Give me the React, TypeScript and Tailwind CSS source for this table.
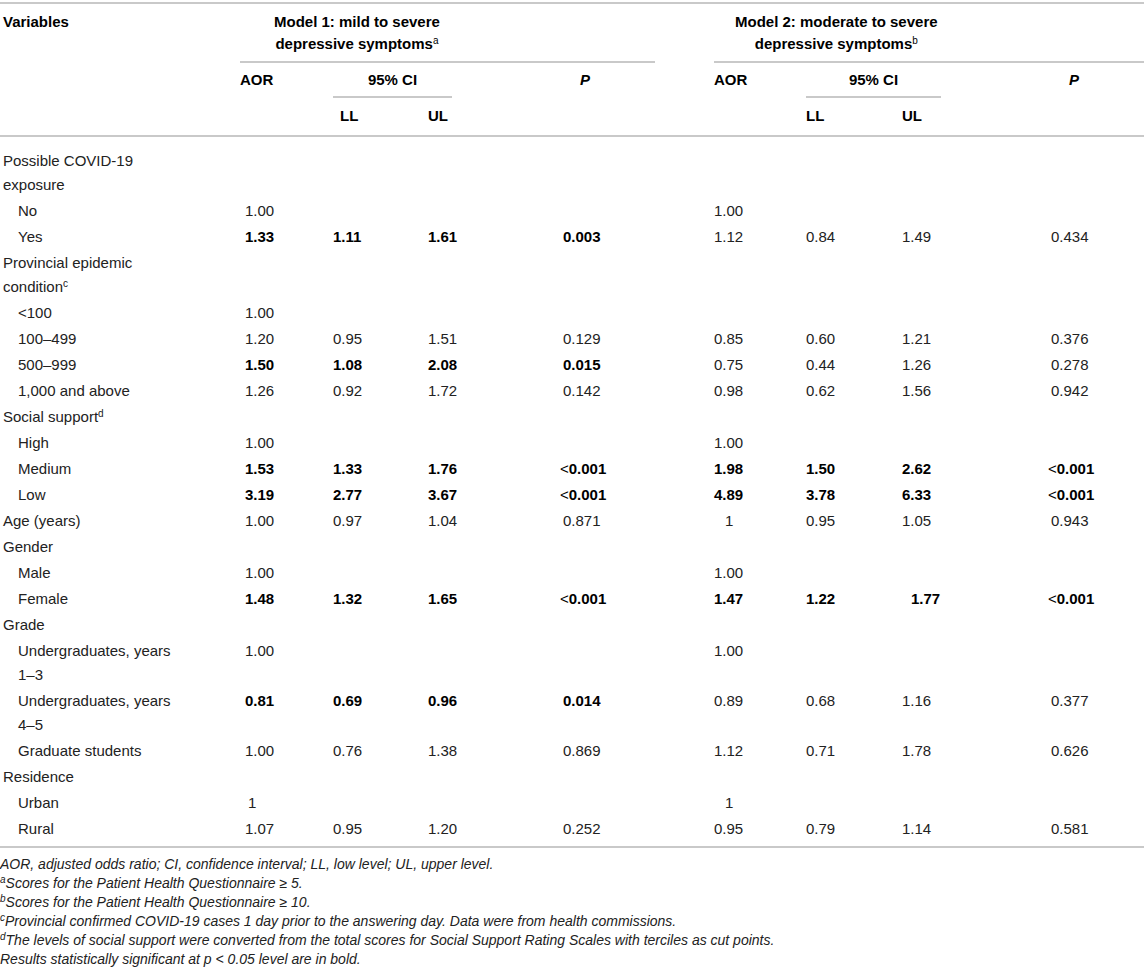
import React from 'react';

type Row = {
  label: React.ReactNode;
  sub?: boolean;
  m1?: string[];
  m2?: string[];
  b1?: boolean;
  b2?: boolean;
};

const cols = 'grid grid-cols-[240px_93px_95px_135px_151px_92px_96px_149px_93px]';

const rows: Row[] = [
  { label: <>Possible COVID-19<br />exposure</> },
  { label: 'No', sub: true, m1: ['1.00'], m2: ['1.00'] },
  { label: 'Yes', sub: true, m1: ['1.33', '1.11', '1.61', '0.003'], b1: true, m2: ['1.12', '0.84', '1.49', '0.434'] },
  { label: <>Provincial epidemic<br />condition<sup className="text-[10px]">c</sup></> },
  { label: <><span className="font-light">&lt;</span>100</>, sub: true, m1: ['1.00'] },
  { label: '100–499', sub: true, m1: ['1.20', '0.95', '1.51', '0.129'], m2: ['0.85', '0.60', '1.21', '0.376'] },
  { label: '500–999', sub: true, m1: ['1.50', '1.08', '2.08', '0.015'], b1: true, m2: ['0.75', '0.44', '1.26', '0.278'] },
  { label: '1,000 and above', sub: true, m1: ['1.26', '0.92', '1.72', '0.142'], m2: ['0.98', '0.62', '1.56', '0.942'] },
  { label: <>Social support<sup className="text-[10px]">d</sup></> },
  { label: 'High', sub: true, m1: ['1.00'], m2: ['1.00'] },
  { label: 'Medium', sub: true, m1: ['1.53', '1.33', '1.76', '<0.001'], b1: true, m2: ['1.98', '1.50', '2.62', '<0.001'], b2: true },
  { label: 'Low', sub: true, m1: ['3.19', '2.77', '3.67', '<0.001'], b1: true, m2: ['4.89', '3.78', '6.33', '<0.001'], b2: true },
  { label: 'Age (years)', m1: ['1.00', '0.97', '1.04', '0.871'], m2: ['1', '0.95', '1.05', '0.943'] },
  { label: 'Gender' },
  { label: 'Male', sub: true, m1: ['1.00'], m2: ['1.00'] },
  { label: 'Female', sub: true, m1: ['1.48', '1.32', '1.65', '<0.001'], b1: true, m2: ['1.47', '1.22', '1.77', '<0.001'], b2: true },
  { label: 'Grade' },
  { label: <>Undergraduates, years<br />1–3</>, sub: true, m1: ['1.00'], m2: ['1.00'] },
  { label: <>Undergraduates, years<br />4–5</>, sub: true, m1: ['0.81', '0.69', '0.96', '0.014'], b1: true, m2: ['0.89', '0.68', '1.16', '0.377'] },
  { label: 'Graduate students', sub: true, m1: ['1.00', '0.76', '1.38', '0.869'], m2: ['1.12', '0.71', '1.78', '0.626'] },
  { label: 'Residence' },
  { label: 'Urban', sub: true, m1: ['1'], m2: ['1'] },
  { label: 'Rural', sub: true, m1: ['1.07', '0.95', '1.20', '0.252'], m2: ['0.95', '0.79', '1.14', '0.581'] },
];

// small quirks of the original typesetting
function shift(v: string, model: 1 | 2, i: number) {
  if (i === 0 && v === '1') return model === 1 ? 'pl-[8px]' : 'pl-[11px]';
  if (model === 2 && v === '1.77') return 'pl-[9px]';
  if (i === 0 && model === 1) return 'pl-[5px]';
  if (v.startsWith('<')) return '-ml-[3px]';
  return '';
}

function Val({ v, bold }: { v: string; bold?: boolean }) {
  if (v.startsWith('<')) {
    return (
      <span className={bold ? 'font-bold text-black' : ''}>
        <span className="font-normal">&lt;</span>
        {v.slice(1)}
      </span>
    );
  }
  return <span className={bold ? 'font-bold text-black' : ''}>{v}</span>;
}

function BodyRow({ r }: { r: Row }) {
  const m1 = r.m1 ?? [];
  const m2 = r.m2 ?? [];
  return (
    <div className={cols + ' py-px leading-[24px]'}>
      <div className={r.sub ? 'pl-[18px]' : 'pl-[3px]'}>{r.label}</div>
      {[0, 1, 2, 3].map(i => (
        <div key={'a' + i} className={shift(m1[i] ?? '', 1, i)}>
          {m1[i] && <Val v={m1[i]} bold={r.b1} />}
        </div>
      ))}
      {[0, 1, 2, 3].map(i => (
        <div key={'b' + i} className={shift(m2[i] ?? '', 2, i)}>
          {m2[i] && <Val v={m2[i]} bold={r.b2} />}
        </div>
      ))}
    </div>
  );
}

export default function App() {
  return (
    <div className="w-[1144px] bg-white text-[15px] text-[#222] font-['Liberation_Sans',Arial,sans-serif]">
      <div className="pt-[2px]">
        {/* Header */}
        <div className={cols + ' border-t-2 border-b-2 border-[#c9c9c9] font-bold text-black leading-[22px]'}>
          <div className="row-span-3 pl-[3px] pt-[7px]">Variables</div>
          <div className="col-span-4 pt-[7px]">
            <div className="w-[415px] border-b-2 border-[#c9c9c9] pb-[6px]">
              <div className="ml-[34px] inline-block text-center">
                Model 1: mild to severe
                <br />
                depressive symptoms<sup className="text-[10px] font-normal">a</sup>
              </div>
            </div>
          </div>
          <div className="col-span-4 pt-[7px]">
            <div className="border-b-2 border-[#c9c9c9] pb-[6px]">
              <div className="ml-[21px] inline-block text-center">
                Model 2: moderate to severe
                <br />
                depressive symptoms<sup className="text-[10px] font-normal">b</sup>
              </div>
            </div>
          </div>
          <div className="row-span-2 pt-[6px] pl-[0px]">AOR</div>
          <div className="col-span-2 pt-[6px]">
            <div className="w-[119px] border-b-2 border-[#c9c9c9] pb-[5px] text-center">95% CI</div>
          </div>
          <div className="row-span-2 pt-[6px] pl-[17px] italic">P</div>
          <div className="row-span-2 pt-[6px]">AOR</div>
          <div className="col-span-2 pt-[6px]">
            <div className="w-[135px] border-b-2 border-[#c9c9c9] pb-[5px] text-center">95% CI</div>
          </div>
          <div className="row-span-2 pt-[6px] pl-[18px] italic">P</div>
          <div className="pt-[7px] pb-[8px] pl-[7px]">LL</div>
          <div className="pt-[7px] pb-[8px]">UL</div>
          <div className="pt-[7px] pb-[8px]">LL</div>
          <div className="pt-[7px] pb-[8px]">UL</div>
        </div>

        {/* Body */}
        <div className="border-b-2 border-[#c9c9c9] pt-[11px] pb-[4px]">
          {rows.map((r, i) => (
            <BodyRow key={i} r={r} />
          ))}
        </div>

        {/* Footnotes */}
        <div className="pt-[7px] text-[14px] italic leading-[19px] text-[#222]">
          <p>AOR, adjusted odds ratio; CI, confidence interval; LL, low level; UL, upper level.</p>
          <p><sup className="text-[10px]">a</sup>Scores for the Patient Health Questionnaire ≥ 5.</p>
          <p><sup className="text-[10px]">b</sup>Scores for the Patient Health Questionnaire ≥ 10.</p>
          <p><sup className="text-[10px]">c</sup>Provincial confirmed COVID-19 cases 1 day prior to the answering day. Data were from health commissions.</p>
          <p><sup className="text-[10px]">d</sup>The levels of social support were converted from the total scores for Social Support Rating Scales with terciles as cut points.</p>
          <p>Results statistically significant at p &lt; 0.05 level are in bold.</p>
        </div>
      </div>
    </div>
  );
}
